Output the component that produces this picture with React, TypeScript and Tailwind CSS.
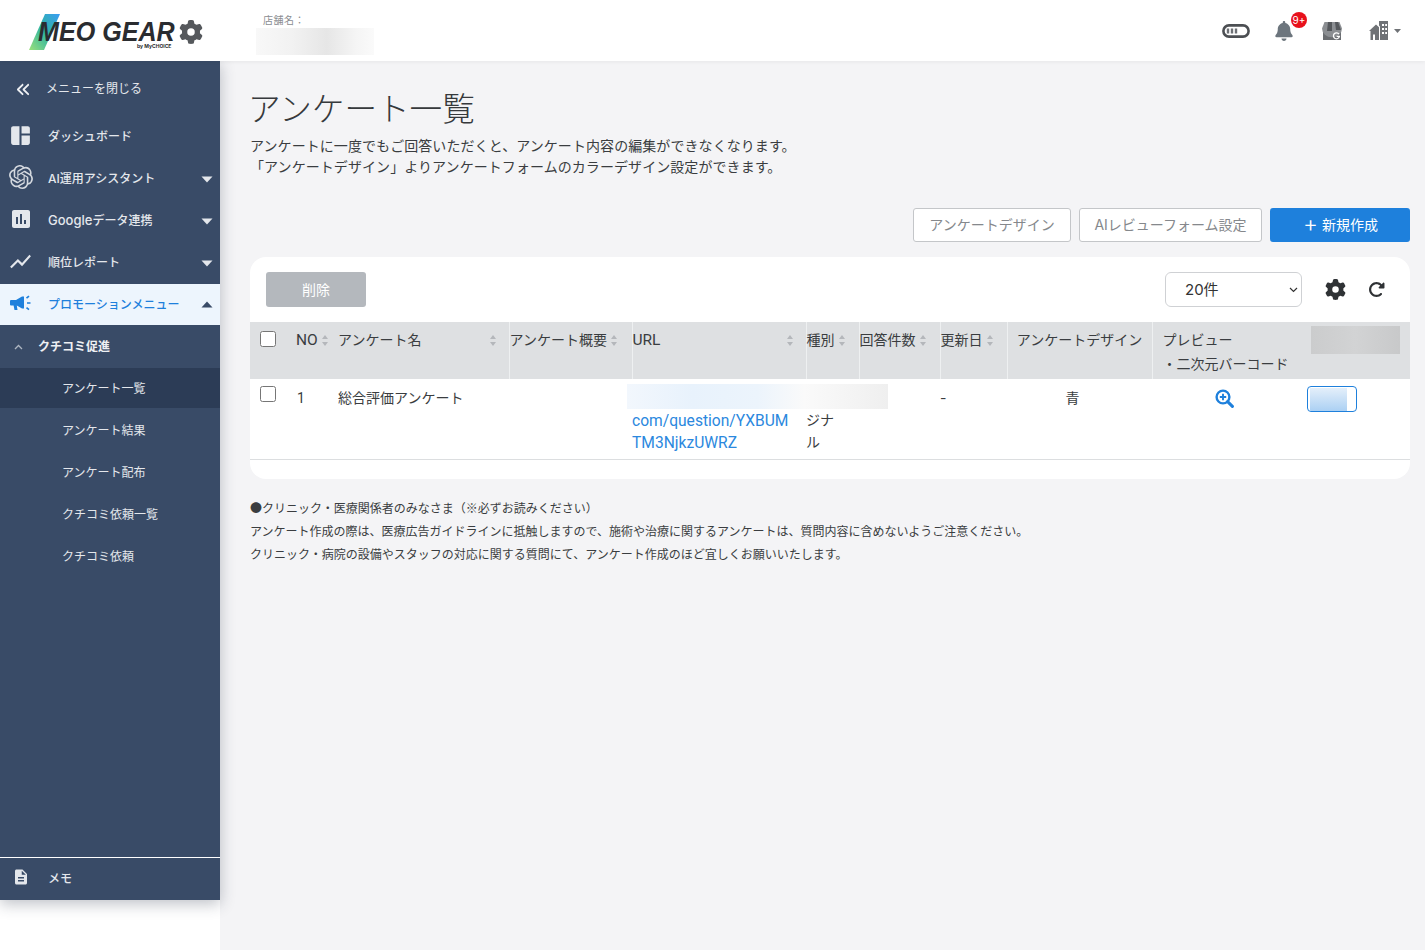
import { FaAnglesLeft, FaBell, FaGear, FaRotateRight } from "react-icons/fa6";
import { MdSpaceDashboard, MdAssessment, MdShowChart, MdDescription } from "react-icons/md";
import { SiOpenai } from "react-icons/si";

function Caret({ up }: { up?: boolean }) {
  return (
    <svg width="12" height="7" viewBox="0 0 12 7" className="ml-auto shrink-0">
      <path d={up ? "M0.5 6.5 L6 0.5 L11.5 6.5 Z" : "M0.5 0.5 L6 6.5 L11.5 0.5 Z"} fill="currentColor" />
    </svg>
  );
}

function SortIcon() {
  return (
    <svg width="6" height="11" viewBox="0 0 6 11" className="shrink-0 text-[#b4b7bb]">
      <path d="M3 0 L6 4 L0 4 Z M3 11 L6 7 L0 7 Z" fill="currentColor" />
    </svg>
  );
}

function NavItem({ icon, label, caret }: { icon: React.ReactNode; label: React.ReactNode; caret?: boolean }) {
  return (
    <div className="flex h-[42px] items-center pl-[8px] pr-[7px] text-[12px] font-medium text-[#e4e7ec]">
      <span className="-mt-[4px] flex w-[25px] justify-center">{icon}</span>
      <span className="ml-[15px]">{label}</span>
      {caret && <Caret />}
    </div>
  );
}

function SubItem({ label }: { label: string }) {
  return <div className="flex h-[42px] items-center pl-[62px] text-[12px] text-[#e4e7ec]">{label}</div>;
}

function Sidebar() {
  return (
    <aside className="relative z-[1] flex h-[839px] w-[220px] shrink-0 flex-col bg-[#394b67] shadow-[0_4px_14px_rgba(40,50,70,0.3)]">
      <div className="flex h-[55px] items-center pl-[16px] pt-[1px] text-[12px] text-[#e4e7ec]">
        <FaAnglesLeft className="text-[15px] text-[#eef0f3]" />
        <span className="ml-[15px]">メニューを閉じる</span>
      </div>
      <NavItem icon={<MdSpaceDashboard className="text-[25px] text-[#e4e7ec]" />} label="ダッシュボード" />
      <NavItem icon={<SiOpenai className="text-[24px] text-[#d5d9df]" />} label="AI運用アシスタント" caret />
      <NavItem
        icon={<MdAssessment className="text-[24px] text-[#e4e7ec]" />}
        label={
          <>
            <span className="text-[13px]">Google</span>データ連携
          </>
        }
        caret
      />
      <NavItem icon={<MdShowChart className="text-[25px] text-[#e4e7ec]" />} label="順位レポート" caret />
      <div className="flex h-[41px] items-center bg-[#edf5fd] pl-[10px] pr-[7px] text-[12px] font-medium text-[#1e80dc]">
        <svg width="21" height="16" viewBox="0 0 21 16" className="-mt-[3px]">
          <path d="M0 6 Q0 5 1 5 H6 L12 1.5 H14 V13.5 H12 L6.8 10.5 L7.5 15 H4.5 L3.6 10.5 H1 Q0 10.5 0 9.5 Z" fill="currentColor" />
          <path d="M16.5 3.2 L19 1.2 M17 8 H20.5 M16.5 12.6 L19 14.6" stroke="currentColor" strokeWidth="1.7" />
        </svg>
        <span className="ml-[17px]">プロモーションメニュー</span>
        <span className="ml-auto text-[#394b67]">
          <Caret up />
        </span>
      </div>
      <div className="flex h-[43px] items-center pl-[14px] text-[12px] font-bold text-[#eef0f3]">
        <svg width="9" height="6" viewBox="0 0 9 6" className="text-[#aeb6c2]">
          <path d="M1 5 L4.5 1.5 L8 5" fill="none" stroke="currentColor" strokeWidth="1.3" />
        </svg>
        <span className="ml-[15px]">クチコミ促進</span>
      </div>
      <div className="mb-[2px] flex h-[40px] items-center bg-[#2c3c56] pl-[62px] pt-[1px] text-[12px] text-[#e4e7ec]">アンケート一覧</div>
      <SubItem label="アンケート結果" />
      <SubItem label="アンケート配布" />
      <SubItem label="クチコミ依頼一覧" />
      <SubItem label="クチコミ依頼" />
      <div className="mt-auto flex h-[43px] items-center border-t border-white pl-[8px] text-[12px] font-medium text-[#e4e7ec]">
        <span className="flex w-[25px] justify-center">
          <MdDescription className="-mt-[5px] text-[18px]" />
        </span>
        <span className="ml-[15px]">メモ</span>
      </div>
    </aside>
  );
}

function Header() {
  return (
    <header className="relative z-10 flex h-[61px] items-center bg-white pl-[29px] pr-[24px] shadow-[0_1px_4px_rgba(0,0,0,0.06)]">
      <div className="relative mt-[3px] flex h-[36px] w-[175px] items-center">
        <svg width="52" height="36" viewBox="0 0 52 36" className="absolute left-0 top-0">
          <defs>
            <linearGradient id="logoGrad" x1="0" y1="1" x2="1" y2="0">
              <stop offset="0" stopColor="#9be07c" />
              <stop offset="0.5" stopColor="#2fb5a0" />
              <stop offset="1" stopColor="#3a9cf5" />
            </linearGradient>
          </defs>
          <path d="M0 36 L16 0 L31 0 L15 36 Z" fill="url(#logoGrad)" />
        </svg>
        <span className="relative ml-[9px] origin-left scale-x-[0.93] whitespace-nowrap text-[27px] font-bold italic leading-[20px] text-[#2a2c30] [font-family:'Liberation_Sans',sans-serif]">
          MEO GEAR
        </span>
        <FaGear className="absolute left-[150px] top-[6px] text-[24px] text-[#55585c]" />
        <span className="absolute left-[108px] top-[29px] whitespace-nowrap text-[5px] font-bold leading-[6px] text-[#2a2c30]">
          by MyCHOICE
        </span>
      </div>
      <div className="ml-[52px] mt-[7px] flex flex-col">
        <span className="ml-[7px] text-[10px] leading-[14px] tracking-[0.5px] text-[#8a8d91]">店舗名：</span>
        <div className="mt-[1px] h-[27px] w-[118px] bg-[linear-gradient(90deg,#f8f8f8_0%,#f2f2f2_30%,#e6e6e6_60%,#f5f5f5_85%,#fafafa_100%)]" />
      </div>
      <div className="ml-auto flex items-center">
        <svg width="28" height="14" viewBox="0 0 28 14">
          <rect x="1.4" y="1.4" width="25.2" height="11.2" rx="5.6" fill="none" stroke="#4c4f53" strokeWidth="2.6" />
          <path d="M6 4.5 V9.5 M10 4.5 V9.5 M14 4.5 V9.5" stroke="#6d7075" strokeWidth="2.4" />
        </svg>
        <div className="relative ml-[24px] flex h-[24px] w-[20px] items-center justify-center">
          <FaBell className="text-[20px] text-[#6c757d]" />
          <span className="absolute -right-[13px] -top-[7px] flex h-[16px] w-[16px] items-center justify-center rounded-full bg-[#e8111c] text-[10px] leading-none text-white">
            9+
          </span>
        </div>
        <svg width="22" height="20" viewBox="0 0 22 20" className="ml-[27px]">
          <path d="M2 9 H20 V19 H2 Z" fill="#6a6d71" />
          <path d="M3.5 1 H18.5 L21 7.5 A3 2.6 0 0 1 1 7.5 Z" fill="#8b8e92" />
          <path d="M7 1 H11 V10 H6 Z M14 1 H17 L20 9 H15 Z" fill="#55585c" />
          <path d="M18 13.2 A3 3 0 1 0 18.4 15.4 H15.6" fill="none" stroke="#fff" strokeWidth="1.3" />
        </svg>
        <svg width="20" height="19" viewBox="0 0 20 19" className="ml-[26px]">
          <path d="M0 10 L7 3.5 L10 6.2 V19 H6 V13.5 H4 V19 H1.5 V10 Z" fill="#6f7276" />
          <path d="M10 0 H19 V19 H11 V5.5 L10 4.5 Z" fill="#6f7276" />
          <path d="M13 3 H15 V5 H13 Z M16.2 3 H18 V5 H16.2 Z M13 7 H15 V9 H13 Z M16.2 7 H18 V9 H16.2 Z M13 11 H15 V13 H13 Z M16.2 11 H18 V13 H16.2 Z" fill="#fff" />
        </svg>
        <svg width="7" height="4" viewBox="0 0 7 4" className="ml-[5px]">
          <path d="M0 0 H7 L3.5 4 Z" fill="#6f7276" />
        </svg>
      </div>
    </header>
  );
}

const headCols = [
  { label: "NO", gap: "ml-[4px]", latin: true },
  { label: "アンケート名", spread: true },
  { label: "アンケート概要", gap: "ml-[4px]" },
  { label: "URL", spread: true, latin: true },
  { label: "種別", gap: "ml-[4px]" },
  { label: "回答件数", gap: "ml-[4px]" },
  { label: "更新日", gap: "ml-[4px]" },
];

function SurveyTable() {
  return (
    <div className="relative mt-[15px]">
      <table className="w-full table-fixed border-collapse text-[14px] text-[#3a3d40]">
        <colgroup>
          <col className="w-[46px]" />
          <col className="w-[42px]" />
          <col className="w-[171px]" />
          <col className="w-[123px]" />
          <col className="w-[174px]" />
          <col className="w-[53px]" />
          <col className="w-[81px]" />
          <col className="w-[67px]" />
          <col className="w-[145px]" />
          <col className="w-[155px]" />
          <col className="w-[103px]" />
        </colgroup>
        <thead>
          <tr className="h-[57px] bg-[#dee0e2] align-top">
            <th className="pl-[10px] pt-[9px] text-left font-normal">
              <input type="checkbox" className="block h-[16px] w-[16px]" />
            </th>
            {headCols.map((col, i) => (
              <th
                key={col.label}
                className={`pt-[6px] text-left font-normal leading-[24px] ${i >= 2 ? "border-l border-[#eef0f1]" : ""}`}
              >
                <div className={`flex items-center whitespace-nowrap ${col.spread ? "justify-between pr-[13px]" : ""}`}>
                  <span className={col.latin ? "text-[15.5px] [font-family:Roboto,sans-serif]" : ""}>{col.label}</span>
                  <span className={col.gap}>
                    <SortIcon />
                  </span>
                </div>
              </th>
            ))}
            <th className="border-l border-[#eef0f1] pt-[6px] text-center font-normal leading-[24px]">アンケートデザイン</th>
            <th className="border-l border-[#eef0f1] pl-[10px] pt-[6px] text-left font-normal leading-[24px]">
              プレビュー
              <br />
              ・二次元バーコード
            </th>
            <th className="pt-[4px] font-normal">
              <div className="ml-[4px] h-[28px] w-[89px] bg-[linear-gradient(90deg,#cbcccd,#d2d3d4_50%,#c8c9ca)]" />
            </th>
          </tr>
        </thead>
        <tbody>
          <tr className="h-[80px] border-b border-[#dcdee0] align-top leading-[22px]">
            <td className="pl-[10px] pt-[7px]">
              <input type="checkbox" className="block h-[16px] w-[16px]" />
            </td>
            <td className="pl-[1px] pt-[8px] [font-family:Roboto,sans-serif]">1</td>
            <td className="pt-[8px]">総合評価アンケート</td>
            <td />
            <td className="pt-[9px] text-[15.6px] text-[#2b88de] [font-family:Roboto,sans-serif]">
              <div className="h-[22px]" />
              com/question/YXBUM
              <br />
              TM3NjkzUWRZ
            </td>
            <td className="pt-[8px]">
              <div className="h-[22px]" />
              ジナ
              <br />
              ル
            </td>
            <td />
            <td className="pt-[8px]">-</td>
            <td className="pr-[14px] pt-[8px] text-center">青</td>
            <td className="pl-[63px] pt-[10px]">
              <svg width="19" height="19" viewBox="0 0 19 19" className="text-[#1e80dc]">
                <circle cx="8" cy="8" r="6.4" fill="none" stroke="currentColor" strokeWidth="2.4" />
                <path d="M8 4.8 V11.2 M4.8 8 H11.2" stroke="currentColor" strokeWidth="1.9" />
                <path d="M12.6 12.6 L17.4 17.4" stroke="currentColor" strokeWidth="3" strokeLinecap="round" />
              </svg>
            </td>
            <td className="pt-[7px]">
              <div className="h-[26px] w-[50px] overflow-hidden rounded-[4px] border border-[#1e80dc] bg-white">
                <div className="ml-[2px] mt-[1px] h-[24px] w-[37px] bg-[linear-gradient(180deg,#e4effa,#a9cff3)]" />
              </div>
            </td>
          </tr>
        </tbody>
      </table>
      <div className="absolute left-[377px] top-[62px] h-[25px] w-[261px] bg-[linear-gradient(90deg,#f2f7fd_0%,#e8f2fc_25%,#ecf4fc_50%,#fafafa_68%,#efefef_100%)]" />
    </div>
  );
}

export default function App() {
  return (
    <div className="min-h-[950px] bg-white [font-family:Inter,'Noto_Sans_CJK_JP',sans-serif]">
      <Header />
      <div className="flex h-[889px]">
        <Sidebar />
        <main className="flex-1 bg-[#f4f4f6] pl-[30px] pr-[15px] text-[#3a3d40]">
          <h1 className="-ml-[2px] mt-[26px] text-[32.6px] font-light leading-[44px] text-[#36393c]">アンケート一覧</h1>
          <p className="mt-[4px] text-[14px] leading-[21px] tracking-[0.07px]">
            アンケートに一度でもご回答いただくと、アンケート内容の編集ができなくなります。
            <br />
            「アンケートデザイン」よりアンケートフォームのカラーデザイン設定ができます。
          </p>
          <div className="mt-[31px] flex justify-end gap-[8px]">
            <button type="button" className="h-[34px] w-[158px] rounded-[3px] border border-[#c4c6c9] bg-white pb-[1px] text-[14px] text-[#85888c]">
              アンケートデザイン
            </button>
            <button type="button" className="h-[34px] w-[183px] rounded-[3px] border border-[#c4c6c9] bg-white pb-[1px] text-[14px] text-[#85888c]">
              AIレビューフォーム設定
            </button>
            <button type="button" className="flex h-[34px] w-[140px] items-center justify-center rounded-[3px] bg-[#1e80dc] pb-[1px] pl-[1px] text-[14px] text-white">
              <span className="mr-[4px] text-[23px] font-light leading-none">+</span>新規作成
            </button>
          </div>
          <section className="mt-[15px] overflow-hidden rounded-[16px] bg-white pb-[19px]">
            <div className="flex items-center pl-[16px] pr-[24px] pt-[15px]">
              <button type="button" className="h-[35px] w-[100px] rounded-[3px] bg-[#b4b8bd] pb-[1px] text-[14px] text-white">
                削除
              </button>
              <div className="relative ml-auto">
                <select className="block h-[35px] w-[137px] appearance-none rounded-[6px] border border-[#cfd1d4] bg-white pl-[19px] pt-[1px] text-[15px] text-[#333]">
                  <option>20件</option>
                </select>
                <svg width="9" height="6" viewBox="0 0 9 6" className="pointer-events-none absolute right-[4px] top-[15px]">
                  <path d="M1 1 L4.5 4.5 L8 1" fill="none" stroke="#333" strokeWidth="1.2" />
                </svg>
              </div>
              <FaGear className="ml-[23px] text-[21px] text-[#2f3235]" />
              <FaRotateRight className="ml-[22px] mr-[1px] text-[17px] text-[#2f3235]" />
            </div>
            <SurveyTable />
          </section>
          <div className="mt-[19px] text-[12px] leading-[23px] text-[#3a3d40] [font-family:Roboto,'Noto_Sans_CJK_JP',sans-serif]">
            <p>●クリニック・医療関係者のみなさま（※必ずお読みください）</p>
            <p>アンケート作成の際は、医療広告ガイドラインに抵触しますので、施術や治療に関するアンケートは、質問内容に含めないようご注意ください。</p>
            <p>クリニック・病院の設備やスタッフの対応に関する質問にて、アンケート作成のほど宜しくお願いいたします。</p>
          </div>
        </main>
      </div>
    </div>
  );
}
